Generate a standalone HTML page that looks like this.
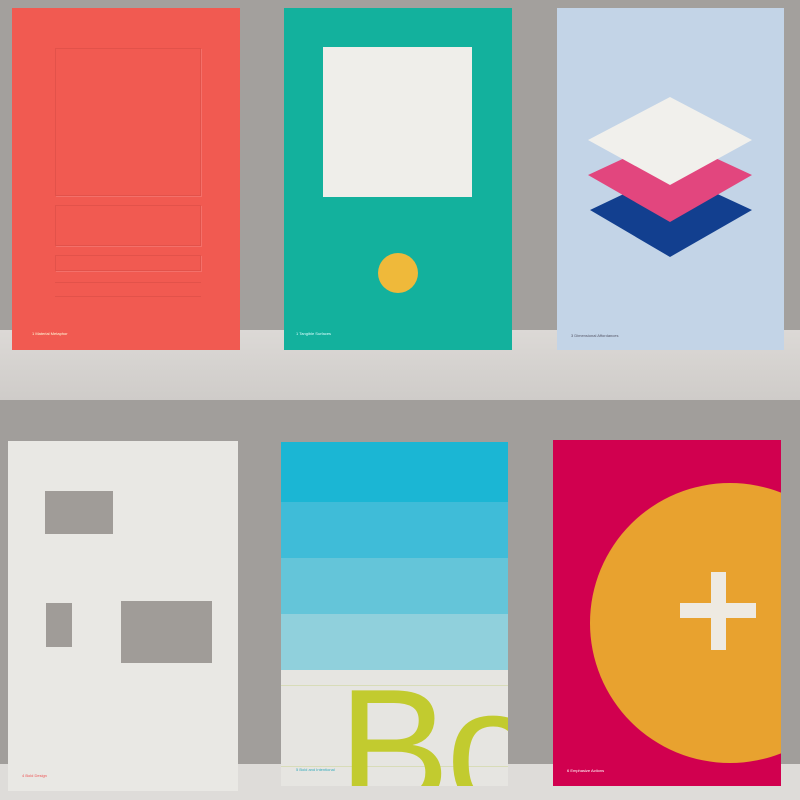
<html><head><style>
body{margin:0;width:800px;height:800px;position:relative;overflow:hidden;background:#a29f9c;font-family:"Liberation Sans",sans-serif}
div{position:absolute;box-sizing:border-box}
.lbl{font-size:4px;}
</style></head><body>
<div style="left:0;top:0;width:800px;height:330px;background:#a3a09d"></div>
<div style="left:0;top:330px;width:800px;height:70px;background:linear-gradient(#dcd9d6,#cfccc9)"></div>
<div style="left:0;top:400px;width:800px;height:364px;background:#a19e9b"></div>
<div style="left:0;top:764px;width:800px;height:36px;background:#dedcd9"></div>

<!-- card 1 -->
<div style="left:12px;top:8px;width:228px;height:342px;background:#f15a51"></div>
<div style="left:55px;top:48px;width:146px;height:148px;border:1px solid #e2524a;box-shadow:1px 1px 0 #f4706a"></div>
<div style="left:55px;top:205px;width:146px;height:41px;border:1px solid #e2524a;box-shadow:1px 1px 0 #f4706a"></div>
<div style="left:55px;top:255px;width:146px;height:16px;border:1px solid #e2524a;box-shadow:1px 1px 0 #f4706a"></div>
<div style="left:55px;top:282px;width:146px;height:1px;background:#e2524a"></div>
<div style="left:55px;top:296px;width:146px;height:1px;background:#e2524a"></div>
<div class="lbl" style="left:32px;top:331px;color:#ffd">1 Material Metaphor</div>

<!-- card 2 -->
<div style="left:284px;top:8px;width:228px;height:342px;background:#13b19d"></div>
<div style="left:323px;top:47px;width:149px;height:150px;background:#efeeea"></div>
<div style="left:378px;top:253px;width:40px;height:40px;border-radius:50%;background:#efb93a"></div>
<div class="lbl" style="left:296px;top:331px;color:#dff">1 Tangible Surfaces</div>

<!-- card 3 -->
<div style="left:557px;top:8px;width:227px;height:342px;background:#c3d4e7"></div>
<svg style="position:absolute;left:0;top:0" width="800" height="800">
<polygon points="590,210 670,172 752,210 670,257" fill="#123f8f"/>
<polygon points="588,175 670,137 752,175 670,222" fill="#e2467e"/>
<polygon points="588,140 670,97 752,140 670,185" fill="#f1f0ec"/>
</svg>
<div class="lbl" style="left:571px;top:333px;color:#556">3 Dimensional Affordances</div>

<!-- card 4 -->
<div style="left:8px;top:441px;width:230px;height:350px;background:#e9e8e4"></div>
<div style="left:45px;top:491px;width:68px;height:43px;background:#a09c98"></div>
<div style="left:46px;top:603px;width:26px;height:44px;background:#a09c98"></div>
<div style="left:121px;top:601px;width:91px;height:62px;background:#a09c98"></div>
<div class="lbl" style="left:22px;top:773px;color:#e55">4 Bold Design</div>

<!-- card 5 -->
<div style="left:281px;top:442px;width:227px;height:344px;background:#e6e5e1;overflow:hidden">
<div style="left:0;top:0;width:227px;height:60px;background:#1bb6d4"></div>
<div style="left:0;top:60px;width:227px;height:56px;background:#3fbcd8"></div>
<div style="left:0;top:116px;width:227px;height:56px;background:#64c5d9"></div>
<div style="left:0;top:172px;width:227px;height:56px;background:#90d0dc"></div>
<div style="left:0;top:243px;width:227px;height:1px;background:#d8dcb8"></div>
<div style="left:0;top:324px;width:227px;height:1px;background:#d8dcb8"></div>
<div style="left:57px;top:222px;font-size:168px;line-height:1;color:#c2cb2f;letter-spacing:-4px">Bo</div>
<div class="lbl" style="left:15px;top:325px;color:#3ab">5 Bold and Intentional</div>
</div>

<!-- card 6 -->
<div style="left:553px;top:440px;width:228px;height:346px;background:#d1004f;overflow:hidden">
<div style="left:37px;top:43px;width:280px;height:280px;border-radius:50%;background:#e8a22f"></div>
<div style="left:127px;top:163px;width:76px;height:15px;background:#eeeae2"></div>
<div style="left:158px;top:132px;width:15px;height:78px;background:#eeeae2"></div>
<div class="lbl" style="left:14px;top:328px;color:#fff">6 Emphasize Actions</div>
</div>
</body></html>
